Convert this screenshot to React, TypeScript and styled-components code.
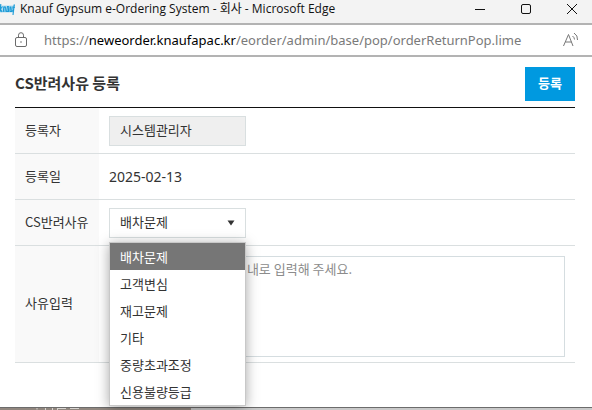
import React from "react";
import styled, { createGlobalStyle } from "styled-components";

const GlobalStyle = createGlobalStyle`
  *, *::before, *::after { box-sizing: border-box; }
  body {
    margin: 0;
    background: #ffffff;
    color: #333333;
    font: 13px/20px "Noto Sans CJK KR", sans-serif;
  }
`;

const Window = styled.div`
  display: flex;
  flex-direction: column;
  min-height: 100vh;
`;

const TitleBar = styled.header`
  display: flex;
  align-items: center;
  height: 23px;
  padding-bottom: 5px;
  background: #f3f3f3;
  overflow: hidden;
`;

const Logo = styled.svg`
  flex: none;
  margin-right: 5px;
`;

const WindowTitle = styled.span`
  flex: 1;
  min-width: 0;
  overflow: hidden;
  white-space: nowrap;
  color: #111111;
  font: 12px/18px "Open Sans", "Noto Sans CJK KR", sans-serif;
`;

const WindowButtons = styled.div`
  display: flex;
  flex: none;
  width: 135px;
`;

const WindowButton = styled.button`
  display: grid;
  flex: none;
  place-items: center;
  width: 46px;
  height: 18px;
  padding: 0;
  border: 0;
  background: none;
`;

const AddressBar = styled.div`
  display: flex;
  align-items: center;
  height: 34px;
  padding: 0 13px;
  border: solid #b3b3b3;
  border-width: 2px 0;
`;

const Address = styled.span`
  flex: 1;
  min-width: 0;
  margin-left: 16px;
  overflow: hidden;
  white-space: nowrap;
  color: #7a7a7a;
  font: 13px/20px "Noto Sans", sans-serif;
`;

const Host = styled.span`
  color: #000000;
`;

const IconButton = styled.button`
  display: flex;
  padding: 0;
  border: 0;
  background: none;
`;

const Content = styled.main`
  flex: 1;
  padding: 10px 17px 0 15px;
`;

const Heading = styled.div`
  display: flex;
  align-items: center;
  justify-content: space-between;
  margin-bottom: 6px;
`;

const Title = styled.h1`
  margin: 0;
  padding-bottom: 2px;
  font-size: 15px;
  font-weight: 700;
`;

const SubmitButton = styled.button`
  width: 50px;
  height: 34px;
  padding: 0 0 2px;
  border: 0;
  background: #0099e0;
  color: #ffffff;
  font: 700 13px/20px "Noto Sans CJK KR", sans-serif;
`;

const Form = styled.form`
  border-top: 1px solid #111111;
`;

const Row = styled.div`
  display: grid;
  grid-template-columns: 84px 1fr;
  min-height: 46px;
  border-bottom: 1px solid #dadfe0;
`;

const Label = styled.label`
  display: flex;
  align-items: center;
  padding: 0 0 2px 10px;
  background: #f9f9f9;
`;

const Cell = styled.div<{ $tall?: boolean }>`
  display: flex;
  align-items: center;
  padding: ${(p) => (p.$tall ? "10px 10px 5px" : "0 10px")};
`;

const DateValue = styled.output`
  font: 14px/20px "Noto Sans", sans-serif;
`;

const TextInput = styled.input`
  width: 137px;
  height: 30px;
  padding: 0 10px 2px;
  border: 1px solid #d9dfe0;
  border-radius: 0;
  background: #efefef;
  color: #333333;
  font: inherit;
`;

const Picker = styled.div`
  position: relative;
  display: flex;
  align-items: center;
`;

const Select = styled.select`
  width: 137px;
  height: 30px;
  padding: 0 10px 2px;
  border: 1px solid #d9dfe0;
  border-radius: 0;
  appearance: none;
  background: #ffffff;
  color: #333333;
  font: inherit;
`;

const Arrow = styled.svg`
  position: absolute;
  right: 11px;
  pointer-events: none;
`;

const Menu = styled.ul`
  position: absolute;
  top: 100%;
  left: 0;
  z-index: 2;
  width: 100%;
  margin: 4px 0 0;
  padding: 0;
  border: 1px solid #c8c8c8;
  background: #ffffff;
  box-shadow: 0 2px 12px rgba(0, 0, 0, 0.35);
  list-style: none;
`;

const Option = styled.li<{ $active: boolean }>`
  padding: 0 10px;
  line-height: 27px;
  background: ${(p) => (p.$active ? "#767676" : "transparent")};
  color: ${(p) => (p.$active ? "#ffffff" : "#333333")};
`;

const TextArea = styled.textarea`
  display: block;
  width: 100%;
  height: 101px;
  padding: 2px 10px;
  border: 1px solid #d5dde0;
  border-radius: 0;
  background: #ffffff;
  color: #333333;
  font: inherit;
  resize: none;

  &::placeholder {
    color: #8c8c8c;
    opacity: 1;
  }
`;

const Backdrop = styled.footer`
  display: flex;
  height: 3px;
  padding-left: 32px;
  border-top: 1px solid #6c6c6c;
  background: linear-gradient(90deg, #91877f 0 191px, #c9c9c9 191px);
`;

const reasons = ["배차문제", "고객변심", "재고문제", "기타", "중량초과조정", "신용불량등급"];

export default function App() {
  const [reason, setReason] = React.useState(reasons[0]);

  return (
    <>
      <GlobalStyle />
      <Window>
        <TitleBar>
          <Logo width="15" height="12" viewBox="0 0 15 12" aria-label="Knauf" fill="none" stroke="#1a9ad6" strokeWidth="1.1">
            <path d="M0 2.500h15l-1 7H0z" fill="#b5def2" stroke="none" />
            <path d="M.8 1 0 9M.3 6.200 2.500 3.500M.5 6.200 2 9M3.300 9l.6-5.500M3.700 4.500q1.800-1.500 1.700.5L5 9M8.800 3.500H7.500L6.600 8.500H8.200L8.900 3.500 8.500 9M10.500 3.500l-.5 5h1.600l.6-5M12 8.800l.3-1.800M13 12l1.100-10H15M13 4.300H15" />
          </Logo>
          <WindowTitle>Knauf Gypsum e-Ordering System - 회사 - Microsoft Edge</WindowTitle>
          <WindowButtons>
            <WindowButton type="button" aria-label="최소화">
              <svg width="10" height="10" viewBox="0 0 10 10" stroke="#111"><path d="M0 5.5h10" /></svg>
            </WindowButton>
            <WindowButton type="button" aria-label="최대화">
              <svg width="10" height="10" viewBox="0 0 10 10" fill="none" stroke="#111"><rect x=".5" y=".5" width="9" height="9" rx="1.5" /></svg>
            </WindowButton>
            <WindowButton type="button" aria-label="닫기">
              <svg width="10" height="10" viewBox="0 0 10 10" stroke="#111"><path d="m0 0 10 10M10 0 0 10" /></svg>
            </WindowButton>
          </WindowButtons>
        </TitleBar>
        <AddressBar>
          <IconButton type="button" aria-label="사이트 정보">
            <svg width="15" height="16" viewBox="0 0 15 16" fill="none" stroke="#6b6b6b">
              <rect x="2.5" y="5.5" width="11" height="9" rx="1.5" />
              <path d="M5.5 5.5V3.2a2.5 2.5 0 0 1 5 0v2.3" />
              <circle cx="8" cy="10" r=".8" fill="#6b6b6b" stroke="none" />
            </svg>
          </IconButton>
          <Address>
            https://<Host>neweorder.knaufapac.kr</Host>/eorder/admin/base/pop/orderReturnPop.lime
          </Address>
          <IconButton type="button" aria-label="소리내어 읽기">
            <svg width="16" height="16" viewBox="0 0 16 16" fill="none" stroke="#777">
              <path d="M.5 14 5.5 2.5 10 14M2.3 10h6.2M9.5 4q2 1.5 2 3.5M11 1q4 2.5 3.5 7" />
            </svg>
          </IconButton>
        </AddressBar>
        <Content>
          <Heading>
            <Title>CS반려사유 등록</Title>
            <SubmitButton type="submit" form="return-form">등록</SubmitButton>
          </Heading>
          <Form id="return-form" onSubmit={(e) => e.preventDefault()}>
            <Row>
              <Label htmlFor="writer">등록자</Label>
              <Cell><TextInput id="writer" value="시스템관리자" readOnly /></Cell>
            </Row>
            <Row>
              <Label htmlFor="date">등록일</Label>
              <Cell><DateValue id="date">2025-02-13</DateValue></Cell>
            </Row>
            <Row>
              <Label htmlFor="reason">CS반려사유</Label>
              <Cell>
                <Picker>
                  <Select id="reason" value={reason} onChange={(e) => setReason(e.target.value)}>
                    {reasons.map((r) => <option key={r}>{r}</option>)}
                  </Select>
                  <Arrow width="8" height="6" viewBox="0 0 8 6"><path d="M.5.5h7L4 5.5z" fill="#333" /></Arrow>
                  <Menu role="listbox" aria-label="CS반려사유">
                    {reasons.map((r) => (
                      <Option key={r} role="option" aria-selected={r === reason} $active={r === reason} onClick={() => setReason(r)}>
                        {r}
                      </Option>
                    ))}
                  </Menu>
                </Picker>
              </Cell>
            </Row>
            <Row>
              <Label htmlFor="detail">사유입력</Label>
              <Cell $tall>
                <TextArea id="detail" placeholder="CS반려사유를 500자 이내로 입력해 주세요." />
              </Cell>
            </Row>
          </Form>
        </Content>
        <Backdrop>
          <svg width="50" height="2" viewBox="0 0 50 2" fill="none" stroke="#d8d4d0" aria-hidden="true">
            <path d="M5 0v1.500M13.500 0v2M20.500 0v2M25 .5h9M25.500 0v2M38 .5h9" />
          </svg>
        </Backdrop>
      </Window>
    </>
  );
}
